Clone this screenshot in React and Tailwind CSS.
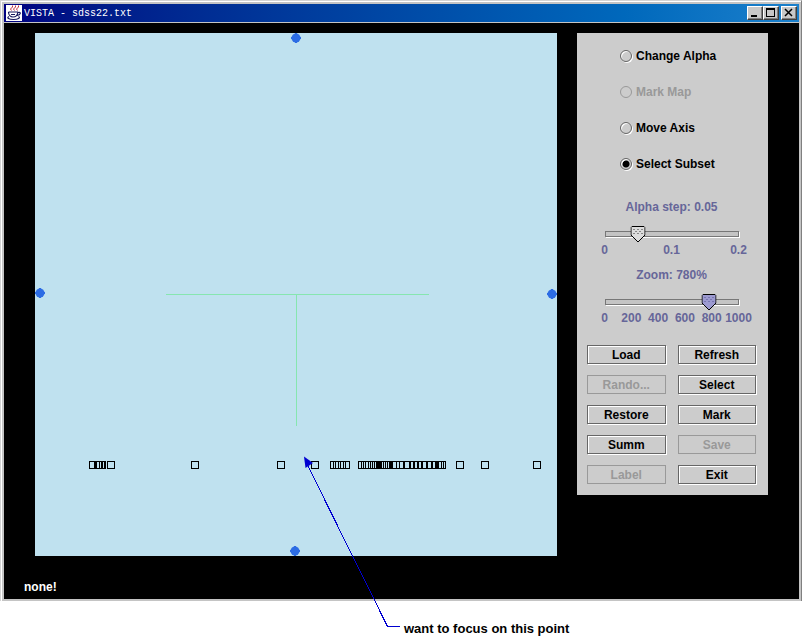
import { useState } from "react";

// plot coordinates are relative to the canvas corner
const POINTS = [72, 156, 242, 276, 421, 446, 498];

// runs of overlapping markers: outline plus the edges that show inside it
const CLUSTERS = [
  { x: 54, w: 17, edges: [[59, 3], [64, 1], [66, 2], [69, 1]] },
  { x: 295, w: 20, edges: [[298, 1], [300, 1], [303, 1], [305, 1], [308, 1], [310, 1]] },
  {
    x: 323,
    w: 88,
    edges: [
      [326, 1], [328, 1], [330, 1], [333, 1], [335, 1], [337, 1], [339, 1],
      [341, 6], [348, 1], [350, 1], [352, 1], [354, 4], [361, 1], [364, 1],
      [368, 2], [374, 2], [378, 2], [382, 2], [386, 2], [391, 2], [396, 2],
      [400, 4], [406, 1], [408, 1],
    ],
  },
];

const HANDLES = [[261, 5], [5, 260], [517, 261], [260, 518]];

const MODES = [
  { id: "alpha", label: "Change Alpha" },
  { id: "map", label: "Mark Map", disabled: true },
  { id: "axis", label: "Move Axis" },
  { id: "subset", label: "Select Subset" },
];

const ACTIONS = [
  { label: "Load" },
  { label: "Refresh" },
  { label: "Rando...", disabled: true },
  { label: "Select" },
  { label: "Restore" },
  { label: "Mark" },
  { label: "Summ" },
  { label: "Save", disabled: true },
  { label: "Label", disabled: true },
  { label: "Exit" },
];

function JavaIcon() {
  return (
    <svg viewBox="0 0 16 16" className="h-4 w-4 bg-white" fill="none" aria-hidden="true">
      <path d="M5.500 5.500L4.500 4l2-2V.5M8.500 5.500L7.500 4l2-2V.5M11.500 5.500L10.500 4l2-2V.5" stroke="#c03040" />
      <path d="M2.500 7h9.500M2.500 7c0 3 2 5 4.500 5s4.500-2 5-5M12 7.500c3.500-1 3 2.500-1 3M5 9.500h4" stroke="#18185c" strokeWidth="1.200" />
      <path d="M3 11.500c-3 1.500 0 3 4.500 3s7.500-1.500 5-3" stroke="#18185c" strokeWidth="1.200" />
    </svg>
  );
}

function WinButton({ label, children }) {
  return (
    <button
      aria-label={label}
      className="flex h-3.5 w-4 items-center justify-center border border-t-white border-l-white border-r-[#404040] border-b-[#404040] bg-[#c8c8c8] shadow-[inset_-1px_-1px_0_#808080]"
    >
      <svg viewBox="0 0 12 10" className="h-2.5 w-3 shrink-0" fill="none" stroke="#000" shapeRendering="crispEdges" aria-hidden="true">
        {children}
      </svg>
    </button>
  );
}

function TitleBar() {
  return (
    <header className="flex h-[18px] items-center bg-linear-to-r from-[#000080] to-[#1a80cc] pr-0.5 pl-0.5">
      <JavaIcon />
      <h1 className="ml-0.5 flex-1 pt-0.5 font-['Liberation_Mono',monospace] text-[10px] leading-4 font-normal text-white">VISTA - sdss22.txt</h1>
      <WinButton label="Minimize"><path d="M2 8h6" strokeWidth="2" /></WinButton>
      <WinButton label="Maximize"><path d="M1.500 1v7.500h8V1" /><path d="M1 1h9" strokeWidth="2" /></WinButton>
      <span className="w-0.5" />
      <WinButton label="Close"><path d="M2 1l7 7M9 1l-7 7" strokeWidth="1.500" shapeRendering="auto" /></WinButton>
    </header>
  );
}

function Plot() {
  return (
    <svg viewBox="0 0 522 523" className="min-w-0 flex-1 bg-[#bfe1ef]" role="img" aria-label="Star coordinates plot">
      <g fill="#86e6b0" shapeRendering="crispEdges">
        <rect x="131" y="261" width="263" height="1" />
        <rect x="261" y="261" width="1" height="132" />
      </g>
      {HANDLES.map(([x, y]) => (
        <g key={`${x}-${y}`} fill="#2c6ce4">
          <circle cx={x} cy={y} r="4.500" />
          <path d={`M${x - 5} ${y - 1}h10v2h-10zM${x - 1} ${y - 5}h2v10h-2z`} />
        </g>
      ))}
      <g fill="none" stroke="#000">
        {POINTS.map(x => <rect key={x} x={x + 0.5} y="428.500" width="7" height="7" />)}
        {CLUSTERS.map(c => <rect key={c.x} x={c.x + 0.5} y="428.500" width={c.w - 1} height="7" />)}
      </g>
      {CLUSTERS.flatMap(c => c.edges).map(([x, w]) => <rect key={x} x={x} y="428" width={w} height="8" />)}
    </svg>
  );
}

function Slider({ id, title, value, onChange, max, step, ticks, active }) {
  return (
    <div className="w-[134px]">
      <label htmlFor={id} className="block text-center leading-4">{title}</label>
      <div className="relative mt-[11px] flex h-4 items-center">
        <div className="h-1.5 w-full border border-[#777] bg-[#c4c4c4] shadow-[1px_1px_0_#fff]" />
        <svg
          viewBox="0 0 15 17"
          className="absolute top-0 h-[17px] w-[15px] -translate-x-1/2"
          style={{ left: `${(value / max) * 100}%` }}
          aria-hidden="true"
        >
          <path d="M.5 1.500l1-1h12l1 1V9l-7 7-7-7z" fill={active ? "#9c9ad0" : "#dcdcdc"} stroke="#000" />
          <path
            d="M3 3h1v1H3zM7 3h1v1H7zM11 3h1v1h-1zM5 5h1v1H5zM9 5h1v1H9zM3 7h1v1H3zM7 7h1v1H7zM11 7h1v1h-1z"
            fill={active ? "#555391" : "#333"}
          />
        </svg>
        <input
          id={id}
          type="range"
          min="0"
          max={max}
          step={step}
          value={value}
          onChange={e => onChange(Number(e.target.value))}
          className="absolute inset-0 w-full opacity-0"
        />
      </div>
      <div className="flex justify-between leading-4">
        {ticks.map(t => <span key={t} className="flex w-0 justify-center">{t}</span>)}
      </div>
    </div>
  );
}

function Controls() {
  const [mode, setMode] = useState("subset");
  const [alpha, setAlpha] = useState(0.05);
  const [zoom, setZoom] = useState(780);

  return (
    <aside className="w-[191px] shrink-0 bg-[#ccc] pt-[15px] pr-3 pb-[11px] pl-2.5">
      <fieldset className="flex flex-col gap-5 pl-[33px]">
        {MODES.map(m => (
          <label key={m.id} className={`flex h-4 items-center gap-1 ${m.disabled ? "text-[#999]" : "text-black"}`}>
            <input
              type="radio"
              name="mode"
              checked={mode === m.id}
              disabled={m.disabled}
              onChange={() => setMode(m.id)}
              className="h-3 w-3 appearance-none rounded-full border border-[#666] shadow-[1px_1px_0_#fff,inset_1px_1px_0_#fff] checked:bg-[radial-gradient(circle,#000_3px,transparent_4px)] disabled:border-[#999] disabled:shadow-none"
            />
            {m.label}
          </label>
        ))}
      </fieldset>

      <div className="mt-[27px] flex flex-col items-center gap-[9px] text-[#666699]">
        <Slider id="alpha-step" title={`Alpha step: ${alpha}`} value={alpha} onChange={setAlpha} max={0.2} step={0.01} ticks={["0", "0.1", "0.2"]} />
        <Slider id="zoom" title={`Zoom: ${zoom}%`} value={zoom} onChange={setZoom} max={1000} step={10} ticks={["0", "200", "400", "600", "800", "1000"]} active />
      </div>

      <div className="mt-[19px] grid grid-cols-2 gap-x-3 gap-y-[11px]">
        {ACTIONS.map(a => (
          <button
            key={a.label}
            disabled={a.disabled}
            className="h-[19px] border border-[#666] leading-4 shadow-[1px_1px_0_#fff,inset_1px_1px_0_#fff] disabled:border-[#999] disabled:text-[#999] disabled:shadow-none"
          >
            {a.label}
          </button>
        ))}
      </div>
    </aside>
  );
}

export default function App() {
  return (
    <div className="relative min-h-screen bg-white font-['Liberation_Sans',Arial,sans-serif] text-[12px] font-bold text-black">
      <div className="border-t border-r border-l border-t-[#d4d4d4] border-r-[#808080] border-l-[#d4d4d4]">
        <div className="border-t border-l border-white bg-[#c4c4c4] pt-0.5 pr-0.5 pb-0.5 pl-0.5">
          <TitleBar />
          <main className="mt-px bg-black pt-2.5 pb-1">
            <div className="flex items-start gap-5 px-[31px]">
              <Plot />
              <Controls />
            </div>
            <p className="mt-[23px] pl-5 leading-4 text-white">none!</p>
          </main>
        </div>
      </div>

      <p className="mt-5 pl-[404px] text-[13px] leading-4">want to focus on this point</p>
      <svg className="pointer-events-none absolute top-0 left-0 h-[643px] w-[802px]" viewBox="0 0 802 643" aria-hidden="true">
        <path d="M306 462L387.500 626.500H400" fill="none" stroke="#0000d0" shapeRendering="crispEdges" />
        <path d="M304 456.500l9 6.500-7.500 5z" fill="#0000d0" />
      </svg>
    </div>
  );
}
